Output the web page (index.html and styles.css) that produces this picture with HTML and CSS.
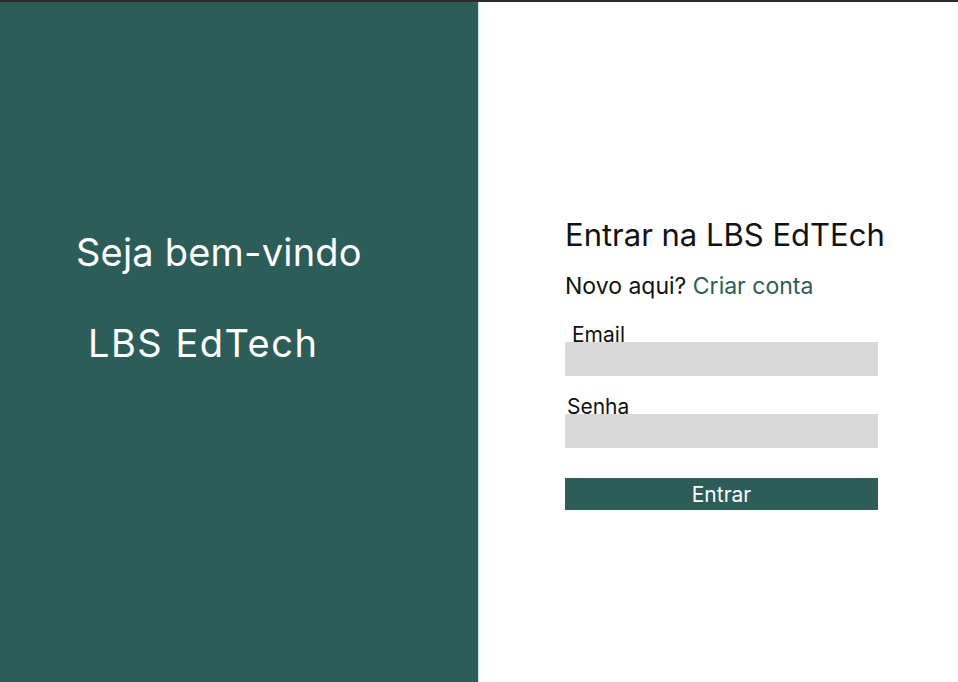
FILE: index.html
```html
<!DOCTYPE html>
<html lang="pt-BR">
<head>
<meta charset="utf-8">
<title>LBS EdTech</title>
<link rel="stylesheet" href="styles.css">
</head>
<body>
<div class="topbar"></div>
<main class="page">
  <section class="hero">
    <h1 class="hero-title">Seja bem-vindo</h1>
    <p class="hero-brand">LBS EdTech</p>
  </section>
  <section class="auth">
    <form class="auth-form">
      <h2 class="auth-title">Entrar na LBS EdTEch</h2>
      <p class="auth-sub">Novo aqui? <a href="#" class="auth-link">Criar conta</a></p>
      <label class="field-label field-label-email">Email</label>
      <div class="field"></div>
      <label class="field-label field-label-senha">Senha</label>
      <div class="field"></div>
      <button type="button" class="btn">Entrar</button>
    </form>
  </section>
</main>
</body>
</html>
```
FILE: styles.css
```css
* { box-sizing: border-box; }
html, body { margin: 0; padding: 0; }
body {
  font-family: Inter, "Noto Sans", sans-serif;
  background: #fff;
  height: 682px;
  overflow: hidden;
}
.topbar { height: 2px; background: #2b2b2b; }
.page { display: flex; height: 680px; }
.hero {
  width: 479px;
  background: #2c5d59;
  border-right: 1px solid #cfe3e6;
  color: #fff;
  padding-top: 226px;
}
.hero-title {
  margin: 0 0 0 76px;
  font-weight: 400;
  font-size: 38px;
  line-height: 48px;
  letter-spacing: 0.2px;
}
.hero-brand {
  margin: 43px 0 0 88px;
  font-size: 38px;
  line-height: 48px;
  letter-spacing: 1.5px;
}
.auth { flex: 1; padding: 213px 0 0 86px; }
.auth-form { width: 313px; display: flex; flex-direction: column; }
.auth-title {
  margin: 0;
  font-weight: 400;
  font-size: 31px;
  line-height: 40px;
  color: #111;
  white-space: nowrap;
}
.auth-sub {
  margin: 16px 0 0;
  font-size: 23px;
  line-height: 30px;
  color: #111;
  white-space: nowrap;
}
.auth-link { color: #2c5d59; text-decoration: none; }
.field-label {
  font-size: 21px;
  line-height: 22px;
  color: #111;
  margin-bottom: -4px;
  position: relative;
}
.field-label-email { margin-top: 23px; padding-left: 7px; }
.field-label-senha { margin-top: 20px; padding-left: 2px; }
.field { height: 34px; background: #d9d9d9; }
.btn {
  margin-top: 30px;
  height: 32px;
  border: 0;
  background: #2c5d59;
  color: #fff;
  font-family: inherit;
  font-size: 21px;
  padding: 0;
}
```
